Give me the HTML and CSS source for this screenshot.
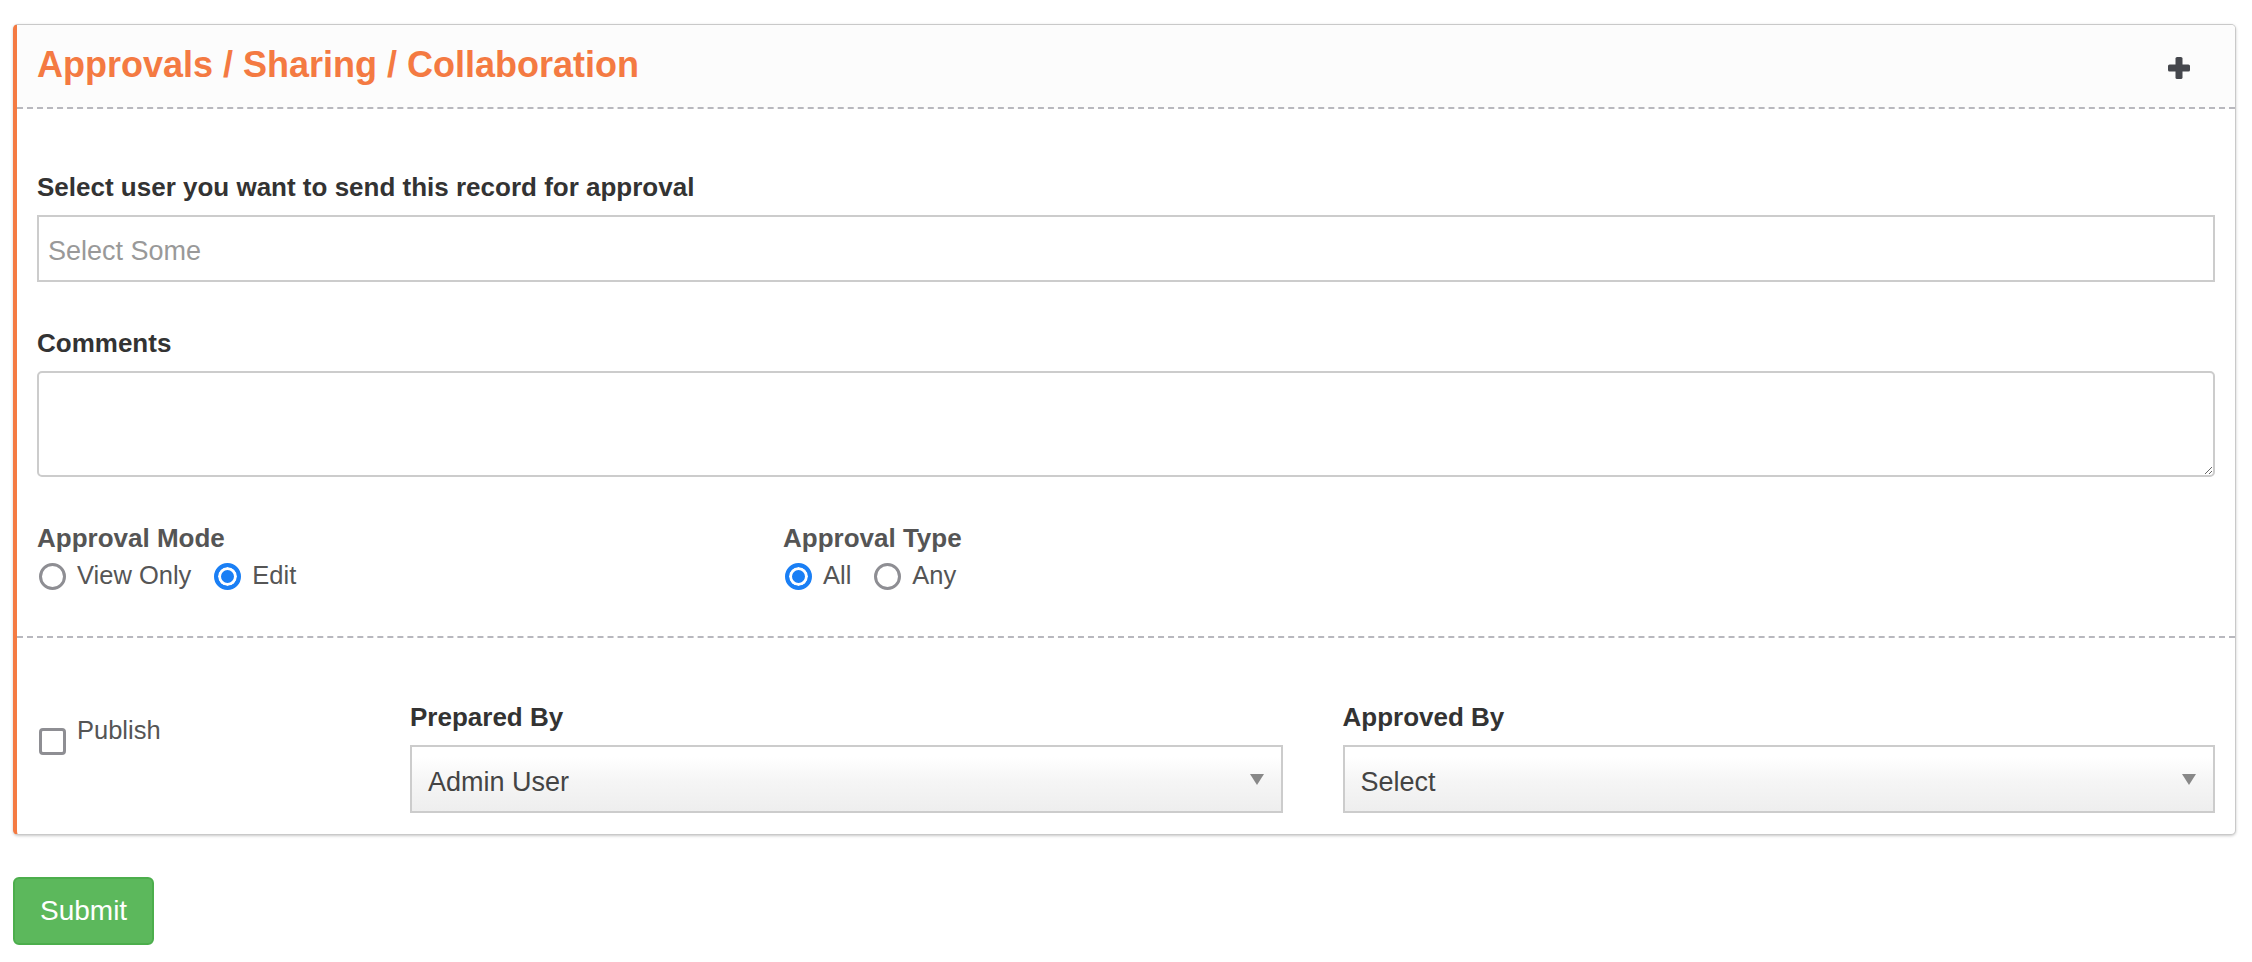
FILE: index.html
```html
<!DOCTYPE html>
<html lang="en">
<head>
<meta charset="utf-8">
<title>Approvals / Sharing / Collaboration</title>
<link rel="stylesheet" href="styles.css">
</head>
<body>
<div class="page">
  <div class="card">
    <div class="card-header">
      <h2 class="card-title">Approvals / Sharing / Collaboration</h2>
      <svg class="plus" width="22" height="22" viewBox="0 0 22 22" aria-hidden="true">
        <rect x="0" y="7.5" width="22" height="7" rx="1.6" fill="#45474d"/>
        <rect x="7.5" y="0" width="7" height="22" rx="1.6" fill="#45474d"/>
      </svg>
    </div>

    <div class="card-section dashed">
      <div class="group">
        <label class="field-label">Select user you want to send this record for approval</label>
        <div class="multi-select">Select Some</div>
      </div>
      <div class="group">
        <label class="field-label">Comments</label>
        <textarea class="comments"></textarea>
      </div>
      <div class="row">
        <div class="col col-4">
          <div class="field-label muted">Approval Mode</div>
          <div class="radio-row">
            <label class="radio"><input type="radio" name="mode"><span>View Only</span></label>
            <label class="radio"><input type="radio" name="mode" checked><span>Edit</span></label>
          </div>
        </div>
        <div class="col col-4">
          <div class="field-label muted">Approval Type</div>
          <div class="radio-row">
            <label class="radio"><input type="radio" name="type" checked><span>All</span></label>
            <label class="radio"><input type="radio" name="type"><span>Any</span></label>
          </div>
        </div>
      </div>
    </div>

    <div class="card-section bottom">
      <div class="row">
        <div class="col col-2">
          <label class="check"><input type="checkbox"><span>Publish</span></label>
        </div>
        <div class="col col-5">
          <div class="field-label">Prepared By</div>
          <div class="select-box">
            <span>Admin User</span>
            <svg class="caret" width="14" height="11" viewBox="0 0 14 11" aria-hidden="true"><polygon points="0,0 14,0 7,11" fill="#888"/></svg>
          </div>
        </div>
        <div class="col col-5">
          <div class="field-label">Approved By</div>
          <div class="select-box">
            <span>Select</span>
            <svg class="caret" width="14" height="11" viewBox="0 0 14 11" aria-hidden="true"><polygon points="0,0 14,0 7,11" fill="#888"/></svg>
          </div>
        </div>
      </div>
    </div>
  </div>

  <button class="btn-submit" type="button">Submit</button>
</div>
</body>
</html>
```

FILE: styles.css
```css
* { box-sizing: border-box; }

html, body {
  margin: 0;
  padding: 0;
  background: #ffffff;
  font-family: "Liberation Sans", Arial, Helvetica, sans-serif;
  color: #333333;
}

.page {
  padding: 24px 16px 0 13px;
}

.card {
  border: 1px solid #c9c9c9;
  border-left: 4px solid #f47a42;
  border-radius: 5px;
  background: #ffffff;
  box-shadow: 0 1px 3px rgba(0, 0, 0, 0.22);
}

.card-header {
  display: flex;
  align-items: center;
  justify-content: space-between;
  padding: 19px 20px 22px 20px;
  background: #fcfcfc;
  border-bottom: 2px dashed #b8b8be;
  border-top-right-radius: 4px;
}

.card-title {
  margin: 0;
  font-size: 36px;
  line-height: 41px;
  font-weight: 700;
  color: #f47a42;
}

.plus {
  display: block;
  margin: 7px 25px 0 0;
}

.card-section {
  padding: 63px 20px 45px 20px;
}

.card-section.dashed {
  border-bottom: 2px dashed #b8b8be;
}

.card-section.bottom {
  padding: 64px 20px 21px 20px;
}

.group {
  margin-bottom: 46px;
}

.field-label {
  display: block;
  font-size: 26px;
  line-height: 30px;
  font-weight: 700;
  color: #333333;
  margin-bottom: 13px;
}

.field-label.muted {
  color: #555555;
  margin-bottom: 8px;
}

.multi-select {
  height: 67px;
  border: 2px solid #cccccc;
  padding: 5px 0 0 9px;
  font-size: 27px;
  line-height: 58px;
  color: #999999;
  background: #ffffff;
}

.comments {
  display: block;
  width: 100%;
  height: 106px;
  border: 2px solid #cccccc;
  border-radius: 5px;
  margin: 0;
  padding: 8px 12px;
  font-family: inherit;
  font-size: 26px;
  background: #ffffff;
  resize: vertical;
}

.row {
  display: flex;
  margin: 0 -30px;
}

.col {
  padding: 0 30px;
}

.col-2 { width: 16.6667%; }
.col-4 { width: 33.3333%; }
.col-5 { width: 41.6667%; }

.radio-row {
  display: flex;
  align-items: center;
  gap: 23px;
  height: 30px;
  padding-left: 2px;
}

.radio {
  display: flex;
  align-items: center;
  gap: 11px;
  font-size: 25.5px;
  line-height: 30px;
  color: #555555;
}

.radio span {
  position: relative;
  top: -1px;
}

.radio input {
  appearance: none;
  -webkit-appearance: none;
  margin: 0;
  width: 27px;
  height: 27px;
  border-radius: 50%;
  border: 3px solid #8e8e93;
  background: #ffffff;
  flex: none;
}

.radio input:checked {
  border: 4px solid #1a7ff5;
  background: #1a7ff5;
  box-shadow: inset 0 0 0 3px #ffffff;
}

.check {
  display: flex;
  align-items: flex-start;
  gap: 11px;
  padding-left: 2px;
  font-size: 25.5px;
  line-height: 30px;
  color: #555555;
}

.check input {
  appearance: none;
  -webkit-appearance: none;
  margin: 26px 0 0 0;
  width: 27px;
  height: 27px;
  border: 3px solid #8e8e93;
  border-radius: 4px;
  background: #ffffff;
  flex: none;
}

.check span {
  margin-top: 13px;
}

.select-box {
  display: flex;
  align-items: center;
  justify-content: space-between;
  height: 68px;
  border: 2px solid #cccccc;
  padding: 6px 17px 0 16px;
  font-size: 27px;
  color: #444444;
  background: linear-gradient(#ffffff 15%, #f5f5f5 55%, #eeeeee 100%);
}

.caret {
  display: block;
  margin-top: -6px;
}

.btn-submit {
  display: flex;
  align-items: center;
  margin-top: 42px;
  height: 68px;
  padding: 0 25px;
  border: 2px solid #4cae4c;
  border-radius: 6px;
  background: #5cb85c;
  color: #ffffff;
  font-family: "Liberation Sans", Arial, Helvetica, sans-serif;
  font-size: 28px;
}
```
